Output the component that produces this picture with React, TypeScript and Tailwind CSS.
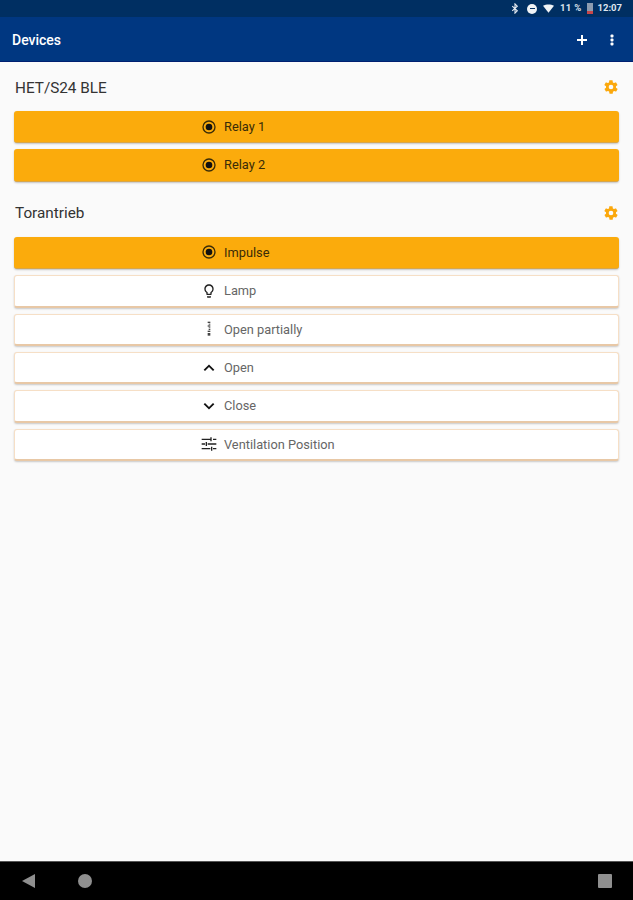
import { ReactNode } from 'react';

const RadioIcon = () => (
  <svg width="16" height="16" viewBox="0 0 24 24" fill="#3a2c08">
    <path d="M12 2a10 10 0 1 0 0 20 10 10 0 0 0 0-20zm0 18a8 8 0 1 1 0-16 8 8 0 0 1 0 16z" />
    <circle cx="12" cy="12" r="5" fill="#111" />
  </svg>
);

const LampIcon = () => (
  <svg width="16" height="16" viewBox="0 0 24 24" fill="#222">
    <path d="M9 21c0 .5.4 1 1 1h4c.6 0 1-.5 1-1v-1H9v1zm3-19C8.100 2 5 5.100 5 9c0 2.400 1.200 4.500 3 5.700V17c0 .5.4 1 1 1h6c.6 0 1-.5 1-1v-2.300c1.800-1.300 3-3.400 3-5.700 0-3.900-3.100-7-7-7zm2.900 11.100l-.9.6V16h-4v-2.300l-.9-.6C7.800 12.200 7 10.600 7 9c0-2.800 2.200-5 5-5s5 2.200 5 5c0 1.600-.8 3.200-2.100 4.100z" />
  </svg>
);

const PartialIcon = () => (
  <svg width="16" height="16" viewBox="0 0 24 24" fill="#444">
    <rect x="10" y="1" width="4" height="2" />
    <rect x="11.500" y="4" width="2.500" height="1.500" />
    <rect x="10" y="6.500" width="4" height="2" />
    <rect x="11.500" y="9.500" width="2.500" height="1.500" />
    <rect x="11.500" y="12" width="2.500" height="1.500" />
    <rect x="10" y="14.500" width="4" height="2" />
    <rect x="10" y="18" width="4" height="4" />
  </svg>
);

const UpIcon = () => (
  <svg width="16" height="16" viewBox="0 0 24 24" fill="#111">
    <path d="M12 6.600l-8 8L6 16.600l6-6 6 6 2-2z" />
  </svg>
);

const DownIcon = () => (
  <svg width="16" height="16" viewBox="0 0 24 24" fill="#111">
    <path d="M12 17.400l-8-8L6 7.400l6 6 6-6 2 2z" />
  </svg>
);

const TuneIcon = () => (
  <svg width="16" height="16" viewBox="0 0 24 24" fill="#222">
    <path d="M1 4h13v2H1zM18 4h5v2h-5zM14 2h2v6h-2zM1 11h5v2H1zM10 11h13v2H10zM7 9h2v6H7zM1 18h13v2H1zM18 18h5v2h-5zM15 16h2v6h-2z" />
  </svg>
);

const GearIcon = () => (
  <svg className="mb-[2px]" width="16" height="16" viewBox="0 0 24 24" fill="#fba80c">
    <path d="M19.400 13c0-.3.1-.6.1-1s0-.7-.1-1l2.100-1.600c.2-.2.2-.4.1-.6l-2-3.500c-.1-.2-.4-.3-.6-.2l-2.500 1c-.5-.4-1.100-.7-1.700-1l-.4-2.600c0-.3-.2-.5-.5-.5h-4c-.3 0-.5.2-.5.4l-.4 2.700c-.6.2-1.100.6-1.700 1l-2.500-1c-.2-.1-.5 0-.6.2l-2 3.500c-.1.2-.1.5.1.6L4.600 11c0 .3-.1.6-.1 1s0 .7.1 1l-2.100 1.600c-.2.2-.2.4-.1.6l2 3.500c.1.2.4.3.6.2l2.500-1c.5.4 1.100.7 1.700 1l.4 2.600c0 .3.2.5.5.5h4c.3 0 .5-.2.5-.4l.4-2.700c.6-.2 1.100-.6 1.700-1l2.500 1c.2.1.5 0 .6-.2l2-3.500c.1-.2.1-.5-.1-.6L19.400 13zM12 15.500a3.500 3.500 0 1 1 0-7 3.500 3.500 0 0 1 0 7z" />
  </svg>
);

const ActionButton = ({ icon, label, active }: { icon: ReactNode; label: string; active?: boolean }) => (
  <div
    className={
      active
        ? 'h-[32.4px] rounded-[3px] bg-[#fbab0c] border-b border-[#d8a64a] shadow-[0_1px_2px_rgba(0,0,0,0.22)] flex items-center'
        : 'h-[32.4px] rounded-[3px] bg-white border border-[#f6dfc6] border-b-2 border-b-[#e8c8a6] shadow-[0_1px_2px_rgba(0,0,0,0.2)] flex items-center'
    }
  >
    <div className={active ? 'ml-[187px] w-[16px] h-[16px] shrink-0 flex items-center justify-center' : 'ml-[186px] w-[16px] h-[16px] shrink-0 flex items-center justify-center'}>{icon}</div>
    <span className={active ? 'ml-[7px] text-[12.8px] text-[#3a2c08]' : 'ml-[7px] text-[12.8px] text-[#666666]'}>{label}</span>
  </div>
);

const DeviceHeader = ({ name }: { name: string }) => (
  <div className="flex items-center justify-between pl-[1px] h-[20px]">
    <span className="text-[15.3px] text-[#333333]">{name}</span>
    <GearIcon />
  </div>
);

export default function App() {
  return (
    <div className="w-[633px] h-[900px] flex flex-col bg-[#fafafa] overflow-hidden" style={{ fontFamily: 'Roboto, sans-serif' }}>
      {/* status bar */}
      <div className="h-[17px] bg-[#002f62] flex items-center justify-end pr-[11px] text-white">
        <svg width="8" height="11" viewBox="0 0 8 12" fill="none" stroke="#e8edf3" strokeWidth="1.2">
          <path d="M1 3.500l5.500 5L4 11V1l2.500 2.500L1 8.500" />
        </svg>
        <div className="ml-[8px] w-[10px] h-[10px] rounded-full bg-[#f0f3f6] flex items-center justify-center">
          <div className="w-[5px] h-[1.5px] bg-[#002f62]" />
        </div>
        <svg className="ml-[6px]" width="11" height="9" viewBox="0 0 12 9" fill="#f0f3f6">
          <path d="M0 1.500C3.500-.5 8.500-.5 12 1.500L6 9z" />
        </svg>
        <span className="ml-[6px] text-[9.5px] font-bold text-[#dfe6ee] tracking-[0.3px]">11 %</span>
        <div className="ml-[5px] w-[6px] h-[11px] bg-[#8c9cb0] flex flex-col justify-end">
          <div className="h-[3px] bg-[#c7474a]" />
        </div>
        <span className="ml-[5px] text-[9.5px] font-bold text-[#dfe6ee]">12:07</span>
      </div>
      {/* app bar */}
      <div className="h-[45px] bg-[#003781] border-b border-[#001f70] flex items-center pl-[12px] pr-[19px] pt-[2px] text-white">
        <span className="text-[14px] font-medium">Devices</span>
        <div className="ml-auto flex items-center gap-[22px]">
          <svg width="12" height="12" viewBox="0 0 12 12" fill="white">
            <path d="M5 1h2v4h4v2H7v4H5V7H1V5h4z" />
          </svg>
          <svg width="4" height="12" viewBox="0 0 4 12" fill="white">
            <rect x="0.500" y="0.500" width="3" height="3" rx="1" />
            <rect x="0.500" y="4.500" width="3" height="3" rx="1" />
            <rect x="0.500" y="8.500" width="3" height="3" rx="1" />
          </svg>
        </div>
      </div>
      {/* device list */}
      <div className="flex-1 px-[14px] pt-[16px]">
        <DeviceHeader name="HET/S24 BLE" />
        <div className="mt-[13px] flex flex-col gap-[6px]">
          <ActionButton active icon={<RadioIcon />} label="Relay 1" />
          <ActionButton active icon={<RadioIcon />} label="Relay 2" />
        </div>
        <div className="mt-[22px]">
          <DeviceHeader name="Torantrieb" />
        </div>
        <div className="mt-[13px] flex flex-col gap-[6px]">
          <ActionButton active icon={<RadioIcon />} label="Impulse" />
          <ActionButton icon={<LampIcon />} label="Lamp" />
          <ActionButton icon={<PartialIcon />} label="Open partially" />
          <ActionButton icon={<UpIcon />} label="Open" />
          <ActionButton icon={<DownIcon />} label="Close" />
          <ActionButton icon={<TuneIcon />} label="Ventilation Position" />
        </div>
      </div>
      {/* nav bar */}
      <div className="h-[39px] bg-black border-t border-[#555555] flex items-center pl-[22px] pr-[21px]">
        <svg width="13" height="14" viewBox="0 0 13 14" fill="#8f8f8f">
          <path d="M13 0v14L0 7z" />
        </svg>
        <div className="ml-[43px] w-[14px] h-[14px] rounded-full bg-[#8f8f8f]" />
        <div className="ml-auto w-[14px] h-[14px] rounded-[1px] bg-[#8f8f8f]" />
      </div>
    </div>
  );
}
